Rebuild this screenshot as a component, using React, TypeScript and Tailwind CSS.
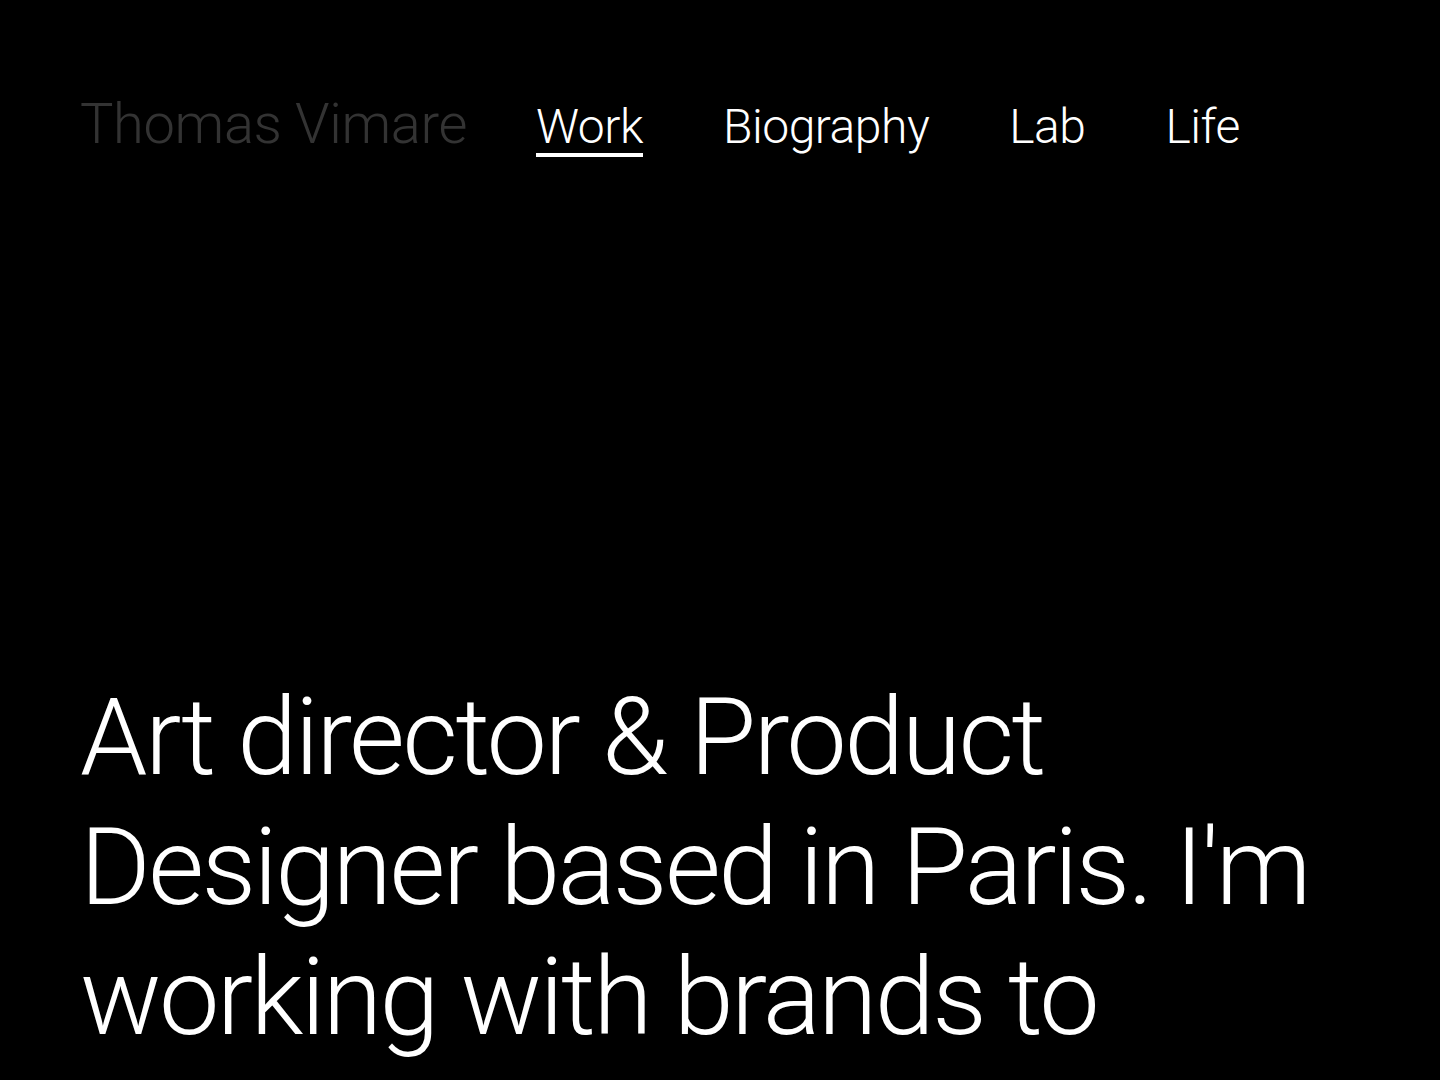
import React from "react";

export default function App() {
  const font = { fontFamily: "Roboto, 'Liberation Sans', sans-serif" };
  return (
    <div className="min-h-[1080px] w-full bg-black text-white overflow-hidden" style={font}>
      <header className="flex h-[200px] items-baseline pl-[80px] pt-[96px]">
        <div className="w-[456px] shrink-0 text-[56px] font-light leading-none text-[#333333] tracking-[-0.006em]">
          Thomas Vimare
        </div>
        <nav className="flex items-baseline gap-[80px] text-[48px] font-light leading-none tracking-[-0.01em]">
          <a className="border-b-4 border-white pb-[2px]">Work</a>
          <a>Biography</a>
          <a>Lab</a>
          <a>Life</a>
        </nav>
      </header>
      <main className="pl-[80px] pt-[472px]">
        <h1 className="text-[108px] font-light leading-[130px] tracking-[-0.024em]">
          Art director &amp; Product
          <br />
          Designer based in Paris. I'm
          <br />
          working with brands to
        </h1>
      </main>
    </div>
  );
}
